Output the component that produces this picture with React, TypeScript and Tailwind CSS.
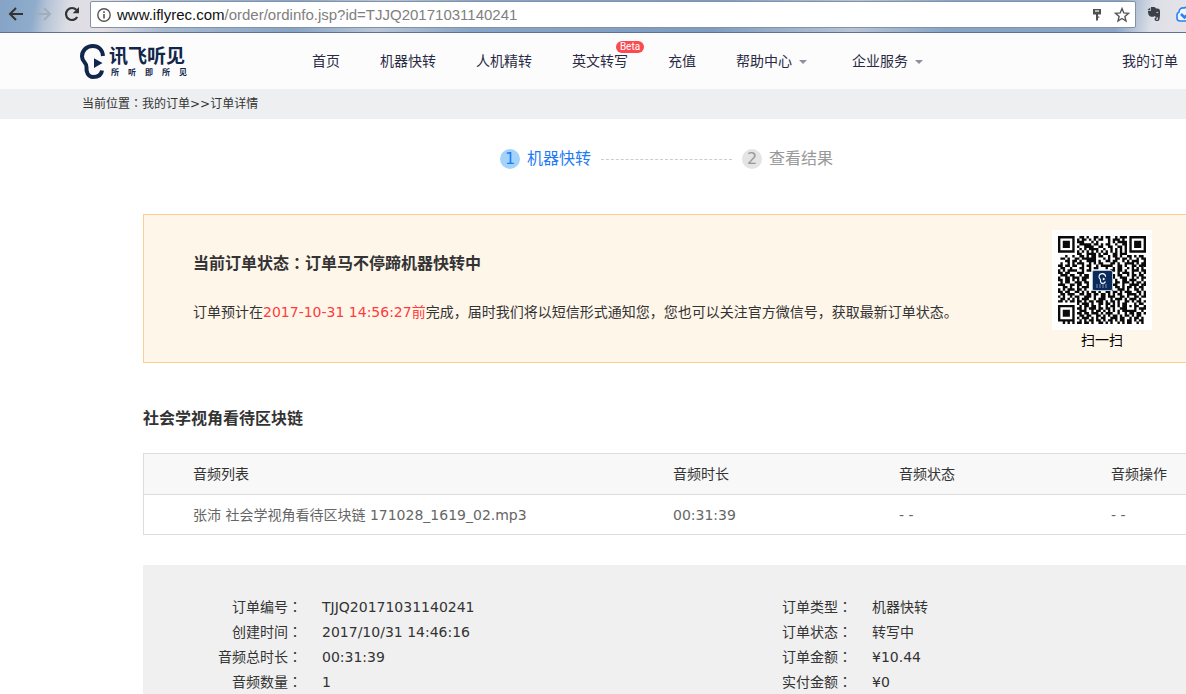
import React from "react";

const QR_ROWS = [
  "#######..##.#..##.#.##..#.###.#######",
  "#.....#.#.##.#.#.##..#.###.#..#.....#",
  "#.###.#.###...#.#....#.#.####.#.###.#",
  "#.###.#..#####.##.#.##..#..##.#.###.#",
  "#.###.#.#..####..##..##..##.#.#.###.#",
  "#.....#..#.#.####..#..#.#.#.#.#.....#",
  "#######.#.#.#.#.#.#.#.#.#.#.#.#######",
  "........##..####.#.##..##.###........",
  "...#..#..##.#.##.##..#.##.#..##.#.##.",
  ".##.#..##.######...#.#..##.##.#..#.##",
  "...##.##.#..####.#..##.##..#.#.###..#",
  ".#..#.#.###..#.#.##...##.#..####.#.##",
  "##.##.##..#.##..#.#####..##.#..##.###",
  ".##..#...##..#.##...#..#.##..#.#.#.#.",
  "#.#.####..#.##........##.##.#..###.##",
  "##.##...###...........#..#.###.#..#.#",
  ".###.##..#.##.........##.##..#.##.##.",
  "#..##.###.###.........##..###..#.#.##",
  "##.##.#.#.##..........#.#..##.###..#.",
  ".#.##..###.##.........#.##.###.#.##.#",
  "###..##.##..#.........###..#..####.##",
  "..##.#..#.###.........#.##.#.##.#.##.",
  "#.#.###.##.#..........#..###.#..##.#.",
  "##.##..##.#.#.##.#..##.##.#.###..##.#",
  ".##.###..##.##.##.##.#.#.##..####.#.#",
  "#.#..#.##..###.#..##.###..##.#..##.##",
  ".##.#.#.#.###..#.###..#.###.#.###.#..",
  "##.#.##.##.#.##.###.#.##.#..##.#.##.#",
  "........#.###.#..##.##.#.#.##...#.##.",
  "#######..#.##.##.#..#.##.#.##.#.##..#",
  "#.....#.##.#.###.##.##.#..###...#.###",
  "#.###.#..###..#.##.#.#.#.#.######..#.",
  "#.###.#.##.##.###.#.###..#..#.##.##.#",
  "#.###.#..##.##..##.#.#.##.#.##.#.##..",
  "#.....#.#.###.#.#.##..###.##..#.##.#.",
  "#######..#.#.##.##.#.##.#.##.##.#.##.",
  "..#.#.#.##.##.#..##.#.#..#.#.##..#.#.",
];

const qrPath = QR_ROWS.map((row, y) =>
  row
    .split("")
    .map((c, x) => (c === "#" ? `M${x} ${y}h1v1h-1z` : ""))
    .join(""),
).join("");

const NAV = [
  { label: "首页" },
  { label: "机器快转" },
  { label: "人机精转" },
  { label: "英文转写", beta: true },
  { label: "充值" },
  { label: "帮助中心", menu: true },
  { label: "企业服务", menu: true },
];

const EAR =
  "M23 12C22.500 6 18.500 2 12.800 2C6.500 2 2 6.500 2 12.500C2 18 7 18.500 6.500 23C6 28 8 33 13 33C18.500 33 21.500 30.500 22 26.500";

function Ear({ className, width }: { className: string; width: number }) {
  return (
    <svg viewBox="0 0 26 35" className={className} aria-hidden="true">
      <path d={EAR} fill="none" stroke="currentColor" strokeWidth={width} />
      <path d="M14 14.200L22.500 19L14 24z" fill="currentColor" />
    </svg>
  );
}

/* Full-width colon centred in its box. */
function Colon() {
  return <span className="font-['Noto_Sans_CJK_JP',sans-serif] leading-none">：</span>;
}

function QrCode() {
  return (
    <div className="relative bg-white p-[6px]">
      <svg viewBox="0 0 37 37" className="size-[88px]" role="img" aria-label="扫一扫">
        <path d={qrPath} fill="#0a0a0a" />
      </svg>
      <div className="absolute inset-0 m-auto flex size-[21px] flex-col items-center justify-center rounded-xs border border-[#b5c3d6] bg-[#0b2a5c]">
        <Ear className="h-[11px] w-[9px] text-white" width={3.5} />
        <svg viewBox="0 0 12 4" className="h-[4px] w-[12px]" aria-hidden="true">
          <path d="M0 1h12M0 3h12" stroke="#7f93b3" strokeDasharray="2 1" />
        </svg>
      </div>
    </div>
  );
}

function Toolbar() {
  return (
    <div className="flex h-[33px] shrink-0 items-start border-b border-[#5f738f] bg-[linear-gradient(100deg,#84a3c6_0,#8faccb_3%,#b4c3d6_4%,#dcdde4_6%,#e3dfe4_9%,#a9bbd2_14%,#86a4c5_25%,#b9c6d8_32%,#87a5c6_40%,#7c9cc0_60%,#b7c4d6_72%,#86a4c5_80%,#8aa5c5_94%,#dde0e7_97%,#e6e3e8_100%)]">
      <button aria-label="后退" className="ml-2 mt-[6px]">
        <svg viewBox="0 0 16 16" className="size-4">
          <path d="M15 8H2M8 2L2 8l6 6" fill="none" stroke="#333" strokeWidth="2" />
        </svg>
      </button>
      <button aria-label="前进" className="ml-3 mt-[6px]">
        <svg viewBox="0 0 16 16" className="size-4">
          <path d="M1 8h13M8 2l6 6l-6 6" fill="none" stroke="#a3adba" strokeWidth="2" />
        </svg>
      </button>
      <button aria-label="重新加载" className="ml-3 mt-[6px]">
        <svg viewBox="0 0 16 16" className="size-4">
          <path d="M13.200 11A6 6 0 1 1 12.500 4" fill="none" stroke="#333" strokeWidth="2.200" />
          <path d="M15 1v6.300H8.700z" fill="#333" />
        </svg>
      </button>
      <div className="ml-[10px] mt-px flex h-[27px] min-w-0 flex-1 items-center rounded-xs border border-[#8392a8] bg-white">
        <svg viewBox="0 0 14 14" className="ml-[6px] size-[14px] shrink-0" aria-hidden="true">
          <circle cx="7" cy="7" r="6.200" fill="none" stroke="#555" strokeWidth="1.400" />
          <path d="M7 6v4.500M7 3.300v1.600" stroke="#555" strokeWidth="1.600" />
        </svg>
        <div className="ml-[6px] flex-1 whitespace-nowrap font-['Liberation_Sans',sans-serif] text-[15px] leading-[25px] text-[#808080]">
          <span className="text-[#111]">www.iflyrec.com</span>/order/ordinfo.jsp?id=TJJQ20171031140241
        </div>
        <button aria-label="密码">
          <svg viewBox="0 0 10 14" className="h-[14px] w-[10px]">
            <path d="M1 1h8v5.500H1z" fill="#505050" />
            <path d="M3 3h4" stroke="#fff" strokeWidth="1.200" />
            <path d="M4 6h2v6.500H4zM6 8.500h1.300v1.200H6z" fill="#505050" />
          </svg>
        </button>
        <button aria-label="收藏" className="ml-[12px] mr-[5px]">
          <svg viewBox="0 0 16 16" className="size-4">
            <path
              d="M8 1.600l1.800 4.300 4.700.4-3.600 3.100 1.100 4.600L8 11.500 4 14l1.100-4.600L1.500 6.300l4.700-.4z"
              fill="none"
              stroke="#555"
              strokeWidth="1.400"
            />
          </svg>
        </button>
      </div>
      <button aria-label="印象笔记" className="ml-[10px] mt-[6px]">
        <svg viewBox="0 0 16 16" className="size-4">
          <path d="M4.200 1.500L4.300 4H1.500z" fill="#3b4247" />
          <path
            d="M5 1h3.200c1 0 1.400.8 1.500 1.300l2.800.5c1 .2 1.300 1 1.400 2 .3 2.500.2 6-.5 8.700-.4 1.300-1.200 1.500-2.400 1.500-1.500 0-2.400-.5-2.400-2s.9-1.900 2.500-1.800v1.400c-.8-.1-1.200.1-1.200.6 0 .4.400.5 1 .5.900 0 1.100-.4 1.100-1.300 0-1.200-.6-1.600-2.300-1.700-.7 0-1.100-.4-1.300-1-.2.800-.5 1.200-1.300 1.100-2.300-.1-3.700-.5-4.400-1.900-.5-1.100-.8-2.500-.8-4.200H5z"
            fill="#3b4247"
          />
          <path d="M10.500 6.500q1.200-.7 1.800.6" stroke="#dfe2e8" fill="none" />
        </svg>
      </button>
      <button aria-label="云" className="-mr-2 ml-[14px] mt-[6px]">
        <svg viewBox="0 0 18 16" className="h-4 w-[18px]">
          <path
            d="M3 6C3 3 5.500 1.500 8 2q4-2 6 2q3 1 3 5v3q0 3-3 3H4q-3 0-3-3V9q0-2 2-3z"
            fill="#eef5ff"
            stroke="#2b82f0"
            strokeWidth="1.600"
          />
          <path d="M5 8l3.500 3.500L14 6" fill="none" stroke="#2b82f0" strokeWidth="2.600" />
        </svg>
      </button>
    </div>
  );
}

function Header() {
  return (
    <header className="flex h-14 shrink-0 items-center whitespace-nowrap bg-[#fcfcfc] pl-20 pr-2 text-[#2a2a45]">
      <a href="#" className="flex items-center text-[#11264b]">
        <Ear className="h-[35px] w-[26px]" width={4} />
        <span className="ml-[3px] flex w-[78px] flex-col pt-px">
          <span className="text-[19px] font-bold leading-[22px]">讯飞听见</span>
          <span className="flex justify-between pl-[2px] text-[8px] font-bold leading-[11px]">
            {["所", "听", "即", "所", "见"].map((c, i) => (
              <span key={i}>{c}</span>
            ))}
          </span>
        </span>
      </a>
      <nav className="ml-[125px] flex gap-10">
        {NAV.map((item) => (
          <a key={item.label} href="#" className="relative flex items-center">
            {item.label}
            {item.menu && (
              <svg viewBox="0 0 8 4" className="ml-[7px] mr-[5px] mt-[2px] h-1 w-2" aria-hidden="true">
                <path d="M0 0h8L4 4z" fill="#8a919c" />
              </svg>
            )}
            {item.beta && (
              <span className="absolute -right-4 -top-[10px] h-3 w-7 rounded-full bg-[#fb4b50] text-center font-['Roboto',sans-serif] text-[10px] leading-3 text-white">
                Beta
              </span>
            )}
          </a>
        ))}
      </nav>
      <a href="#" className="ml-auto">
        我的订单
      </a>
    </header>
  );
}

function Steps() {
  return (
    <ol className="mt-[29px] flex items-center justify-center pl-1 text-base leading-[22px]">
      <li className="flex items-center text-[#1f7cf5]">
        <span className="mr-[7px] size-5 rounded-full bg-[#a3d3fb] text-center leading-5">1</span>
        机器快转
      </li>
      <li aria-hidden="true" className="mx-[10px] w-[131px] border-t border-dashed border-[#ccc]" />
      <li className="flex items-center text-[#999]">
        <span className="mr-[7px] size-5 rounded-full bg-[#e4e4e4] text-center leading-5">2</span>
        查看结果
      </li>
    </ol>
  );
}

function Details({ rows, className }: { rows: [string, string][]; className: string }) {
  return (
    <dl className={className}>
      {rows.map(([k, v]) => (
        <div key={k} className="flex">
          <dt className="w-[159px] text-right">
            {k}
            <Colon />
          </dt>
          <dd className="ml-5">{v}</dd>
        </div>
      ))}
    </dl>
  );
}

export default function App() {
  return (
    <div className="flex h-screen flex-col overflow-hidden bg-white font-['DejaVu_Sans','Noto_Sans_CJK_SC',sans-serif] text-sm text-[#333]">
      <Toolbar />
      <Header />
      <div className="h-[30px] shrink-0 bg-[#edeff1] pl-[82px] text-xs leading-[30px]">
        当前位置
        <Colon />
        <a href="#">我的订单</a>&gt;&gt;订单详情
      </div>
      <main className="flex flex-1 flex-col pl-[143px]">
        <Steps />
        <section className="mt-11 flex items-start justify-between border-y border-l border-[#ffcc91] bg-[#fff6ea] pb-3 pl-[49px] pr-[34px] pt-[15px]">
          <div>
            <h1 className="mt-[22px] text-base font-bold leading-6">
              当前订单状态
              <Colon />
              订单马不停蹄机器快转中
            </h1>
            <p className="mt-6 leading-6">
              订单预计在<span className="text-[#ff3b3b]">2017-10-31 14:56:27前</span>
              完成，届时我们将以短信形式通知您，您也可以关注官方微信号，获取最新订单状态。
            </p>
          </div>
          <div className="flex shrink-0 flex-col items-center text-black">
            <QrCode />
            <span className="leading-5">扫一扫</span>
          </div>
        </section>
        <h2 className="mt-11 text-base font-bold leading-6">社会学视角看待区块链</h2>
        <table className="mt-[22px] w-full table-fixed border-collapse border-y border-l border-[#ddd] text-left">
          <colgroup>
            <col />
            <col className="w-[226px]" />
            <col className="w-[212px]" />
            <col className="w-[75px]" />
          </colgroup>
          <thead className="bg-[#f8f8f8]">
            <tr className="h-[41px] border-b border-[#ddd]">
              <th className="pl-[49px] font-normal">音频列表</th>
              <th className="font-normal">音频时长</th>
              <th className="font-normal">音频状态</th>
              <th className="font-normal">音频操作</th>
            </tr>
          </thead>
          <tbody className="text-[#666]">
            <tr className="h-[40px]">
              <td className="pl-[49px]">张沛 社会学视角看待区块链 171028_1619_02.mp3</td>
              <td>00:31:39</td>
              <td>- -</td>
              <td>- -</td>
            </tr>
          </tbody>
        </table>
        <section className="mt-[30px] flex flex-1 bg-[#f0f0f0] pt-[30px] leading-[25px]">
          <Details
            className="w-[550px]"
            rows={[
              ["订单编号", "TJJQ20171031140241"],
              ["创建时间", "2017/10/31 14:46:16"],
              ["音频总时长", "00:31:39"],
              ["音频数量", "1"],
            ]}
          />
          <Details
            className="flex-1"
            rows={[
              ["订单类型", "机器快转"],
              ["订单状态", "转写中"],
              ["订单金额", "¥10.44"],
              ["实付金额", "¥0"],
            ]}
          />
        </section>
      </main>
    </div>
  );
}
